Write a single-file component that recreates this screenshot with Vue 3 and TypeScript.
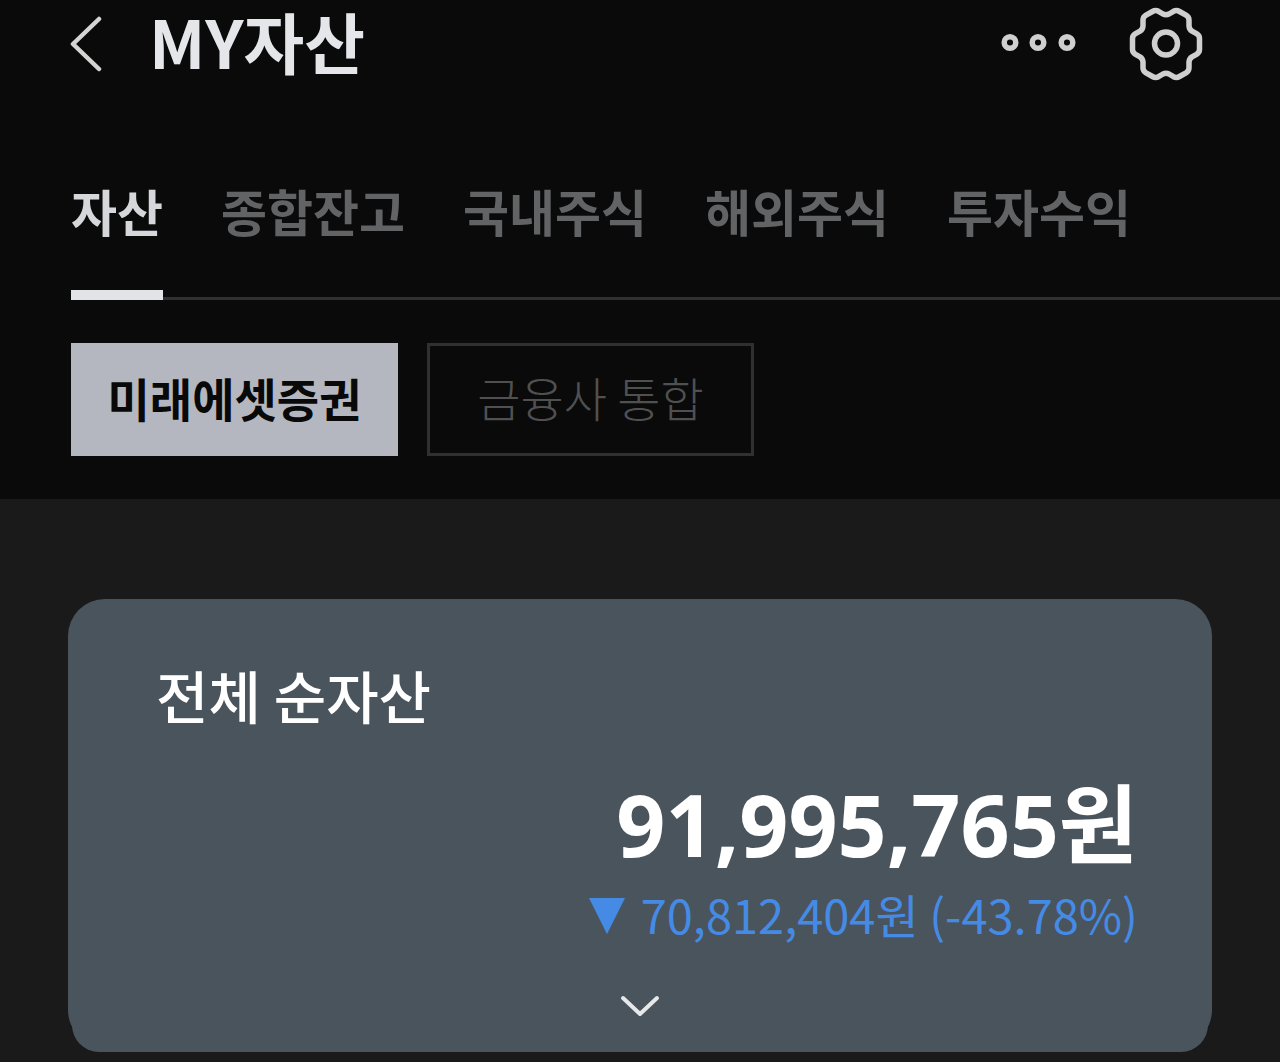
<script setup lang="ts">
import { ref } from 'vue'

const tabs: string[] = ['자산', '종합잔고', '국내주식', '해외주식', '투자수익']
const scopes: string[] = ['미래에셋증권', '금융사 통합']

const activeTab = ref(0)
const activeScope = ref(0)
</script>

<template>
  <div class="screen">
    <div class="top">
      <header class="bar">
        <button class="icon back" type="button" aria-label="뒤로">
          <svg width="36" height="60" viewBox="0 0 36 60">
            <path d="M33 5 L7 30 L33 55" />
          </svg>
        </button>
        <h1>MY자산</h1>
        <button class="icon more" type="button" aria-label="더보기">
          <svg width="78" height="24" viewBox="0 0 78 24">
            <circle cx="10" cy="10.500" r="5.800" />
            <circle cx="38" cy="10.500" r="5.800" />
            <circle cx="67" cy="10.500" r="5.800" />
          </svg>
        </button>
        <button class="icon" type="button" aria-label="설정">
          <svg width="76" height="76" viewBox="0 0 76 76">
            <path
              d="M24.5 5.5 Q27.5 3.800 30.500 5.300 L35 8 Q38 9.500 41 8 L45.500 5.300 Q48.500 3.800 51.500 5.500 L58 9.200 Q61 11 61 14 L61 20 Q61.300 23.500 64 25.200 L68.500 27.700 Q71.500 29.500 71.500 32.500 L71.500 43.500 Q71.500 46.500 68.500 48.300 L64 50.800 Q61.300 52.500 61 56 L61 62 Q61 65 58 66.800 L51.500 70.500 Q48.500 72.200 45.500 70.700 L41 68 Q38 66.500 35 68 L30.500 70.700 Q27.500 72.200 24.500 70.500 L18 66.800 Q15 65 15 62 L15 56 Q14.700 52.500 12 50.800 L7.500 48.300 Q4.500 46.500 4.500 43.500 L4.500 32.500 Q4.500 29.500 7.500 27.700 L12 25.200 Q14.700 23.500 15 20 L15 14 Q15 11 18 9.200 Z"
            />
            <circle cx="38" cy="37.500" r="11.500" />
          </svg>
        </button>
      </header>

      <nav class="tabs" role="tablist">
        <button
          v-for="(tab, i) in tabs"
          :key="tab"
          type="button"
          role="tab"
          class="tab"
          :class="{ active: i === activeTab }"
          :aria-selected="i === activeTab"
          @click="activeTab = i"
        >{{ tab }}</button>
      </nav>

      <div class="scopes">
        <button
          v-for="(scope, i) in scopes"
          :key="scope"
          type="button"
          class="scope"
          :class="{ active: i === activeScope }"
          :aria-pressed="i === activeScope"
          @click="activeScope = i"
        >{{ scope }}</button>
      </div>
    </div>

    <main>
      <section class="card">
        <h2>전체 순자산</h2>
        <p class="amount">91,995,765원</p>
        <p class="change">
          <svg width="36" height="36" viewBox="0 0 36 36" aria-hidden="true">
            <path d="M0 0 H36 L18 36 Z" />
          </svg>
          <span>70,812,404원 (-43.78%)</span>
        </p>
        <button class="icon expand" type="button" aria-label="펼치기">
          <svg width="44" height="40" viewBox="0 0 44 40">
            <path d="M5 12 L22 28 L39 12" />
          </svg>
        </button>
      </section>
    </main>
  </div>
</template>

<style>
body {
  margin: 0;
  background: #1a1a1a;
}
</style>

<style scoped>
.screen {
  font-family: 'Noto Sans CJK KR', sans-serif;
  color: #fff;
  background: #1a1a1a;
}

button {
  margin: 0;
  padding: 0;
  border: 0;
  background: none;
  font-family: inherit;
  white-space: nowrap;
  cursor: pointer;
}

h1,
h2,
p {
  margin: 0;
}

.top {
  background: #0a0a0a;
  padding-bottom: 43px;
}

.bar {
  display: flex;
  align-items: center;
  height: 88px;
  padding: 0 76px 0 66px;
}

.icon {
  display: flex;
}

.icon svg {
  fill: none;
  stroke: #cfcfd0;
  stroke-width: 5.5;
  stroke-linejoin: round;
  stroke-linecap: round;
}

.icon.back svg {
  stroke: #d4d4d2;
  stroke-width: 4.5;
}

h1 {
  margin-left: 47px;
  padding-bottom: 8px;
  color: #e4e6ea;
  font-size: 66px;
  line-height: 80px;
  font-weight: 700;
}

.more {
  margin-left: auto;
  margin-right: 50px;
}

.tabs {
  display: flex;
  gap: 58px;
  margin: 89px 0 0 71px;
  border-bottom: 3px solid #303032;
}

.tab {
  position: relative;
  padding-bottom: 54px;
  color: #626365;
  font-size: 50px;
  line-height: 66px;
  font-weight: 700;
}

.tab.active {
  color: #d6d7da;
}

.tab.active::after {
  content: '';
  position: absolute;
  left: 0;
  right: 0;
  bottom: -3px;
  height: 10px;
  background: #e2e3e6;
}

.scopes {
  display: flex;
  gap: 29px;
  padding: 43px 71px 0;
}

.scope {
  box-sizing: border-box;
  width: 327px;
  height: 113px;
  padding-bottom: 6px;
  border: 3px solid #303031;
  color: #505051;
  font-size: 47px;
  font-weight: 300;
}

.scope.active {
  border-color: #b4b7bf;
  background: #b4b7bf;
  color: #090909;
  font-size: 46px;
  font-weight: 700;
}

main {
  padding: 100px 68px 10px;
}

.card {
  position: relative;
  z-index: 0;
  display: flex;
  flex-direction: column;
  padding: 59px 74px 26px 88px;
}

.card::before,
.card::after {
  content: '';
  position: absolute;
  z-index: -1;
  background: #4a545c;
}

.card::before {
  inset: 0 0 5px;
  border-radius: 37px;
}

.card::after {
  inset: 50% 4px 0;
  border-radius: 0 0 27px 27px;
}

h2 {
  font-size: 57px;
  line-height: 72px;
  font-weight: 500;
}

.amount {
  margin-top: 50px;
  font-family: 'Noto Sans', 'Noto Sans CJK KR', sans-serif;
  font-size: 86px;
  line-height: 88px;
  font-weight: 700;
  text-align: right;
}

.change {
  display: flex;
  justify-content: flex-end;
  align-items: center;
  gap: 16px;
  margin-top: 18px;
  color: #458be6;
  font-size: 47px;
  line-height: 60px;
}

.change span {
  padding-bottom: 4px;
  line-height: 56px;
}

.change svg {
  fill: #458be6;
}

.expand {
  align-self: center;
  margin: 40px 14px 0 0;
}

.icon.expand svg {
  stroke: #e8e8e8;
  stroke-width: 4;
}
</style>
